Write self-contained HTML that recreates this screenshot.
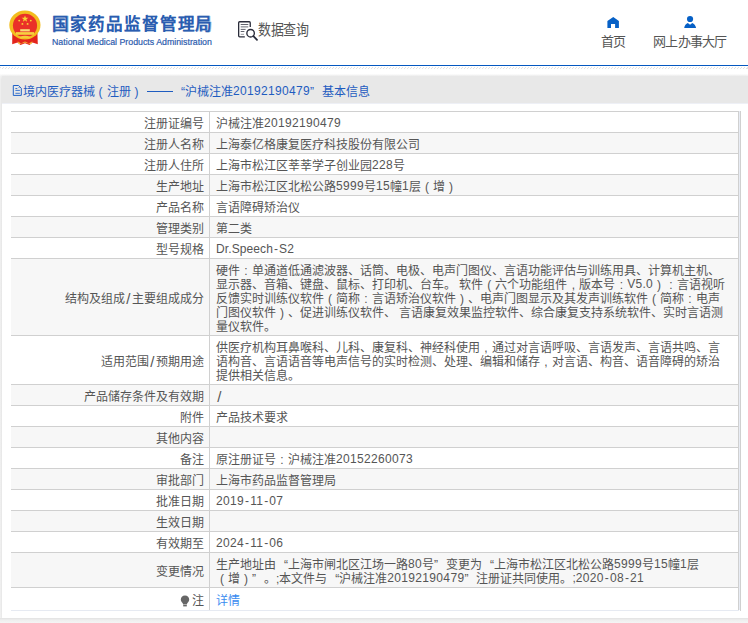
<!DOCTYPE html>
<html lang="zh-CN"><head><meta charset="utf-8">
<style>
*{margin:0;padding:0;box-sizing:border-box}
html,body{width:748px;height:623px;overflow:hidden;background:#fff;font-family:"Liberation Sans",sans-serif;color:#555}
#bline{position:absolute;left:0;top:65px;width:748px;height:1px;background:#0558c0}
.hat{position:absolute;left:0;width:748px;height:1px;background:repeating-linear-gradient(90deg,#e2e2e2 0,#e2e2e2 1px,transparent 1px,transparent 3px)}
#logo{position:absolute;left:0;top:0}
#t1{position:absolute;left:52px;top:13px;font-size:16.5px;letter-spacing:0.93px;line-height:22px;font-weight:bold;color:#2a5db0;text-shadow:0.5px 0 0 rgba(42,93,176,.45);white-space:nowrap}
#t2{position:absolute;left:52px;top:37px;font-size:8.8px;line-height:10px;color:#2d5cae;-webkit-text-stroke:0.2px #2d5cae;white-space:nowrap}
#sq{position:absolute;left:234px;top:18px}
#sqt{position:absolute;left:258px;top:18.5px;letter-spacing:-0.3px;font-size:13px;line-height:20px;color:#555;white-space:nowrap;transform:scaleY(1.12);transform-origin:0 0}
.nav{position:absolute;font-size:13px;letter-spacing:-0.75px;line-height:16px;color:#555;white-space:nowrap}
#page{position:absolute;left:0;top:70px;width:748px;height:553px;background:linear-gradient(#fff 0,#fff 3.5px,#f3f3f3 6px,#f4f4f4 540px,#f6f6f6 553px)}
#panel{position:absolute;left:2px;top:76px;width:746px;height:542px;background:#fff;box-shadow:0 1px 3px rgba(0,0,0,.12)}
#ptitle{position:absolute;left:2px;top:76px;width:746px;height:27px;background:#e8e8e8}
#ptline{position:absolute;left:2px;top:103px;width:746px;height:1px;background:#eef0f6}
#ptt{position:absolute;left:22.5px;top:83.5px;font-size:12px;line-height:16px;color:#1f5cc0;white-space:nowrap}
#picon{position:absolute;left:12px;top:84px}
.row{position:absolute;left:11px;width:728px;border-top:1px solid #d0d0d0;font-size:12px;line-height:14px}
.lab{position:absolute;left:0;width:199px;top:0;border-right:1px solid #d0d0d0;text-align:right;padding:3px 5.3px 0 0;display:flex;align-items:center;justify-content:flex-end;white-space:nowrap}
.val{position:absolute;left:205px;top:0;padding:3px 0 0 0;white-space:nowrap;display:flex;align-items:center}
.a{position:relative;top:-1px;letter-spacing:0.1px}
.d{letter-spacing:0.33px}
.h{padding:0 1px}
.sl{padding:0 1.2px;font-size:15px;top:0.5px;line-height:14px}
.c{display:inline-block;width:12px;text-align:center}
.ql{display:inline-block;width:12px;text-align:right}
.qr{display:inline-block;width:12px;text-align:left}
#rb1{position:absolute;left:738px;top:111px;width:1px;height:499px;background:#d0d0d0}
#rb2{position:absolute;left:739px;top:111px;width:1px;height:499px;background:#e8ecf4}
#rb3{position:absolute;left:740px;top:111px;width:1px;height:500px;background:#d0d0d0}
#bb{position:absolute;left:11px;top:610px;width:728px;height:1px;background:#e6eaf2}
.dash{display:inline-block;width:26px;height:1px;background:#1f5cc0;vertical-align:4px;margin-left:4.5px;margin-right:0}
.lnk{color:#3b8cf0}
.bulb{display:inline-block;vertical-align:0;margin-right:2px}
</style></head><body>
<div id="page"></div>
<div id="panel"></div>
<div style="position:absolute;left:0;top:618px;width:748px;height:5px;background:linear-gradient(#e2e2e2,#eeeeee 2px,#f5f5f5 5px)"></div>
<div id="ptitle"></div>
<div id="ptline"></div>
<svg id="picon" width="14" height="14" viewBox="0 0 14 14"><path d="M1.3 1.5H6.6L9.3 4.3V11.4H1.3Z" fill="none" stroke="#1f62c8" stroke-width="1"/><path d="M3.4 4.5h1.9M3.4 6.4h4.5M3.4 9.3h4.5" stroke="#2a6acc" stroke-width="0.9"/><circle cx="7" cy="3.4" r="0.5" fill="#1f62c8"/></svg>
<div id="ptt">境内医疗器械<span class="c">(</span>注册<span class="c">)</span><span class="dash"></span><span class="ql">“</span>沪械注准<span class="a"><span class="d">20192190479</span></span><span class="qr">”</span>基本信息</div>
<div id="bline"></div>
<div class="hat" style="top:67px;background-position:0 0"></div>
<div class="hat" style="top:68px;background-position:-1px 0"></div>
<svg id="logo" width="50" height="50" viewBox="0 0 50 50">
 <path d="M12.3 32 L37.4 32 L37.8 44.3 L32.5 42.6 L29.5 45 L25 43.2 L20.5 45 L17.5 42.6 L12.2 44.3 Z" fill="#e3241c"/>
 <ellipse cx="24.9" cy="25.1" rx="15.6" ry="14.5" fill="#f3bd1e"/>
 <ellipse cx="25" cy="25.6" rx="12.1" ry="11.8" fill="#ea3128"/>
 <polygon points="25,15.4 25.9,17.8 28.4,17.8 26.4,19.3 27.1,21.7 25,20.2 22.9,21.7 23.6,19.3 21.6,17.8 24.1,17.8" fill="#f8d435"/>
 <circle cx="19.2" cy="20.6" r="0.95" fill="#f8d435"/><circle cx="30.8" cy="20.6" r="0.95" fill="#f8d435"/>
 <circle cx="22.4" cy="23.9" r="0.95" fill="#f8d435"/><circle cx="27.6" cy="23.9" r="0.95" fill="#f8d435"/>
 <path d="M20.2 29.2h9.6v2.2h-9.6z" fill="#f9dc78"/>
 <path d="M16 32.1h18v2.7H16z" fill="#f7d040"/>
 <path d="M19.5 36.8 Q25 34.8 30.5 36.8 L29.5 38.6 Q25 37.6 20.5 38.6Z" fill="#f6cc3a"/>
 <path d="M17.5 41.2 L21 43.4 L25 41.4 L29 43.4 L32.5 41.2 L31 44.2 L25 42.6 L19 44.2Z" fill="#f6cc3a"/>
</svg>
<div id="t1">国家药品监督管理局</div>
<div id="t2">National Medical Products Administration</div>
<svg id="sq" width="28" height="26" viewBox="0 0 28 26">
 <path d="M16.25 8.9V4.75Q16.25 3.75 15.25 3.75H5.65Q4.65 3.75 4.65 4.75V17.8Q4.65 18.8 5.65 18.8H10.8" fill="none" stroke="#2a2c3a" stroke-width="1.3"/>
 <path d="M6.7 6.5h7.6" stroke="#50525e" stroke-width="0.9"/>
 <path d="M6.7 8.85h7.6" stroke="#8a8c94" stroke-width="1.3"/>
 <path d="M6.7 11.4h4.9M6.7 13.5h3.7" stroke="#50525e" stroke-width="0.9"/>
 <path d="M6.7 16.3h3.3" stroke="#8a8c94" stroke-width="0.9"/>
 <circle cx="16.6" cy="15.2" r="3.75" fill="none" stroke="#2a2c3a" stroke-width="1.35"/>
 <path d="M19.4 18.1L23 21.8" stroke="#2a2c3a" stroke-width="1.8" stroke-linecap="round"/>
</svg>
<div id="sqt">数据查询</div>
<svg style="position:absolute;left:600px;top:10px" width="30" height="22" viewBox="0 0 30 22"><path d="M13.25 6.9L7.4 11V17.9H11V13.9H15.1V17.9H18.9V11Z" fill="#0660c6"/></svg>
<svg style="position:absolute;left:676px;top:10px" width="30" height="22" viewBox="0 0 30 22"><circle cx="14.05" cy="9" r="3.1" fill="#0660c6"/><path d="M8.2 18.1C8.5 15.3 10.1 13.4 11.8 12.9L14.05 14.8L16.3 12.9C18 13.4 19.7 15.3 20.1 18.1Z" fill="#0660c6"/></svg>
<div class="nav" style="left:601px;top:33.5px">首页</div>
<div class="nav" style="left:653px;top:33.5px">网上办事大厅</div>
<div class="row" style="top:111px;height:21px;background:#fff"><div class="lab" style="height:20px">注册证编号</div><div class="val" style="height:20px"><div>沪械注准<span class="a"><span class="d">20192190479</span></span></div></div></div>
<div class="row" style="top:132px;height:21px;background:#f7f7f7"><div class="lab" style="height:20px">注册人名称</div><div class="val" style="height:20px"><div>上海泰亿格康复医疗科技股份有限公司</div></div></div>
<div class="row" style="top:153px;height:21px;background:#fff"><div class="lab" style="height:20px">注册人住所</div><div class="val" style="height:20px"><div>上海市松江区莘莘学子创业园<span class="a"><span class="d">228</span></span>号</div></div></div>
<div class="row" style="top:174px;height:21px;background:#f7f7f7"><div class="lab" style="height:20px">生产地址</div><div class="val" style="height:20px"><div>上海市松江区北松公路<span class="a"><span class="d">5999</span></span>号<span class="a"><span class="d">15</span></span>幢<span class="a"><span class="d">1</span></span>层<span class="c">(</span>增<span class="c">)</span></div></div></div>
<div class="row" style="top:195px;height:21px;background:#fff"><div class="lab" style="height:20px">产品名称</div><div class="val" style="height:20px"><div>言语障碍矫治仪</div></div></div>
<div class="row" style="top:216px;height:21px;background:#f7f7f7"><div class="lab" style="height:20px">管理类别</div><div class="val" style="height:20px"><div>第二类</div></div></div>
<div class="row" style="top:237px;height:21px;background:#fff"><div class="lab" style="height:20px">型号规格</div><div class="val" style="height:20px"><div><span class="a">Dr.Speech<span class="h">-</span>S<span class="d">2</span></span></div></div></div>
<div class="row" style="top:258px;height:77px;background:#f7f7f7"><div class="lab" style="height:76px">结构及组成<span class="a sl">/</span>主要组成成分</div><div class="val" style="height:76px"><div>硬件<span class="c">:</span>单通道低通滤波器、话筒、电极、电声门图仪、言语功能评估与训练用具、计算机主机、<br>显示器、音箱、键盘、鼠标、打印机、台车。 软件<span class="c">(</span>六个功能组件<span class="c">,</span>版本号<span class="c">:</span><span class="a">V<span class="d">5</span>.<span class="d">0</span></span><span class="c">)</span><span class="c">:</span>言语视听<br>反馈实时训练仪软件<span class="c">(</span>简称<span class="c">:</span>言语矫治仪软件<span class="c">)</span>、电声门图显示及其发声训练软件<span class="c">(</span>简称<span class="c">:</span>电声<br>门图仪软件<span class="c">)</span>、促进训练仪软件、 言语康复效果监控软件、综合康复支持系统软件、实时言语测<br>量仪软件。</div></div></div>
<div class="row" style="top:335px;height:49px;background:#fff"><div class="lab" style="height:48px">适用范围<span class="a sl">/</span>预期用途</div><div class="val" style="height:48px"><div>供医疗机构耳鼻喉科、儿科、康复科、神经科使用<span class="c">,</span>通过对言语呼吸、言语发声、言语共鸣、言<br>语构音、言语语音等电声信号的实时检测、处理、编辑和储存<span class="c">,</span>对言语、构音、语音障碍的矫治<br>提供相关信息。</div></div></div>
<div class="row" style="top:384px;height:21px;background:#f7f7f7"><div class="lab" style="height:20px">产品储存条件及有效期</div><div class="val" style="height:20px"><div><span class="a sl">/</span></div></div></div>
<div class="row" style="top:405px;height:21px;background:#fff"><div class="lab" style="height:20px">附件</div><div class="val" style="height:20px"><div>产品技术要求</div></div></div>
<div class="row" style="top:426px;height:21px;background:#f7f7f7"><div class="lab" style="height:20px">其他内容</div><div class="val" style="height:20px"><div></div></div></div>
<div class="row" style="top:447px;height:21px;background:#fff"><div class="lab" style="height:20px">备注</div><div class="val" style="height:20px"><div>原注册证号<span class="c">:</span>沪械注准<span class="a"><span class="d">20152260073</span></span></div></div></div>
<div class="row" style="top:468px;height:21px;background:#f7f7f7"><div class="lab" style="height:20px">审批部门</div><div class="val" style="height:20px"><div>上海市药品监督管理局</div></div></div>
<div class="row" style="top:489px;height:21px;background:#fff"><div class="lab" style="height:20px">批准日期</div><div class="val" style="height:20px"><div><span class="a"><span class="d">2019</span><span class="h">-</span><span class="d">11</span><span class="h">-</span><span class="d">07</span></span></div></div></div>
<div class="row" style="top:510px;height:21px;background:#f7f7f7"><div class="lab" style="height:20px">生效日期</div><div class="val" style="height:20px"><div></div></div></div>
<div class="row" style="top:531px;height:21px;background:#fff"><div class="lab" style="height:20px">有效期至</div><div class="val" style="height:20px"><div><span class="a"><span class="d">2024</span><span class="h">-</span><span class="d">11</span><span class="h">-</span><span class="d">06</span></span></div></div></div>
<div class="row" style="top:552px;height:35px;background:#f7f7f7"><div class="lab" style="height:34px">变更情况</div><div class="val" style="height:34px"><div>生产地址由<span class="ql">“</span>上海市闸北区江场一路<span class="a"><span class="d">80</span></span>号<span class="qr">”</span>变更为<span class="ql">“</span>上海市松江区北松公路<span class="a"><span class="d">5999</span></span>号<span class="a"><span class="d">15</span></span>幢<span class="a"><span class="d">1</span></span>层<br><span class="c">(</span>增<span class="c">)</span><span class="qr">”</span>。;本文件与<span class="ql">“</span>沪械注准<span class="a"><span class="d">20192190479</span></span><span class="qr">”</span>注册证共同使用。<span class="a">;<span class="d">2020</span><span class="h">-</span><span class="d">08</span><span class="h">-</span><span class="d">21</span></span></div></div></div>
<div class="row" style="top:587px;height:23px;background:#fff"><div class="lab" style="height:22px"><svg class='bulb' width='10' height='12' viewBox='0 0 10 12'><path d='M5 0.5C2.4 0.5 0.8 2.3 0.8 4.6c0 1.6 0.9 2.6 1.7 3.4 0.4 0.4 0.6 0.9 0.6 1.4h3.8c0-0.5 0.2-1 0.6-1.4 0.8-0.8 1.7-1.8 1.7-3.4C9.2 2.3 7.6 0.5 5 0.5z' fill='#666'/><rect x='3.2' y='10' width='3.6' height='1.4' fill='#666'/></svg>注</div><div class="val" style="height:22px"><div><span class='lnk'>详情</span></div></div></div>
<div id="rb1"></div><div id="rb2"></div><div id="rb3"></div>
<div id="bb"></div>
</body></html>
